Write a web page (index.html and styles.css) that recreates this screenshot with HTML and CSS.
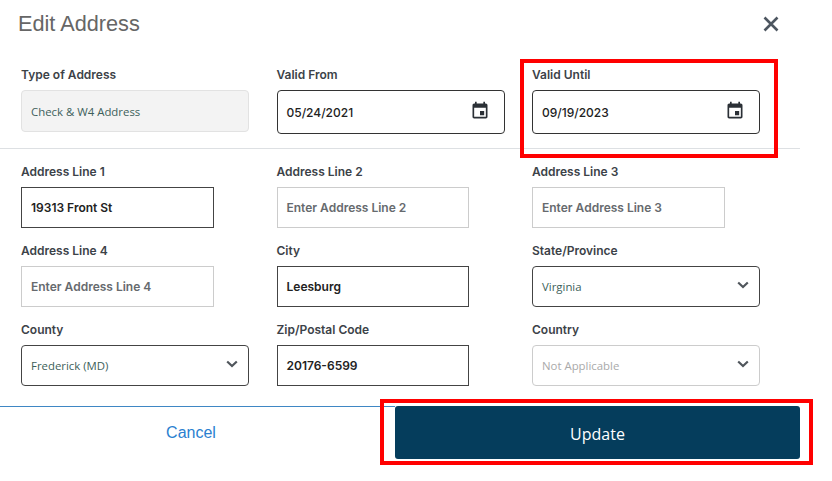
FILE: index.html
```html
<!DOCTYPE html>
<html lang="en">
<head>
    <meta charset="UTF-8">
    <meta name="viewport" content="width=device-width, initial-scale=1.0">
    <title>Edit Address</title>
    <link rel="stylesheet" href="styles.css">
</head>
<body>

    <div class="modal">
        <header class="modal-header">
            <h1>Edit Address</h1>
            <svg class="close-icon" viewBox="0 0 16 16"><path d="M1.5 1.5l13 13M14.5 1.5l-13 13"/></svg>
        </header>

        <div class="form-grid top-row">
            <div class="field">
                <label>Type of Address</label>
                <div class="box readonly">Check &amp; W4 Address</div>
            </div>
            <div class="field">
                <label>Valid From</label>
                <div class="box date">05/24/2021
                    <svg class="calendar-icon" viewBox="0 0 24 24"><path d="M17 12h-5v5h5v-5zM16 1v2H8V1H6v2H5c-1.11 0-1.99.9-1.99 2L3 19c0 1.1.89 2 2 2h14c1.1 0 2-.9 2-2V5c0-1.1-.9-2-2-2h-1V1h-2zm3 18H5V8h14v11z"/></svg>
                </div>
            </div>
            <div class="field">
                <label>Valid Until</label>
                <div class="box date">09/19/2023
                    <svg class="calendar-icon" viewBox="0 0 24 24"><path d="M17 12h-5v5h5v-5zM16 1v2H8V1H6v2H5c-1.11 0-1.99.9-1.99 2L3 19c0 1.1.89 2 2 2h14c1.1 0 2-.9 2-2V5c0-1.1-.9-2-2-2h-1V1h-2zm3 18H5V8h14v11z"/></svg>
                </div>
            </div>
        </div>

        <hr class="divider">

        <div class="form-grid">
            <div class="field">
                <label>Address Line 1</label>
                <div class="box text filled">19313 Front St</div>
            </div>
            <div class="field">
                <label>Address Line 2</label>
                <div class="box text">Enter Address Line 2</div>
            </div>
            <div class="field">
                <label>Address Line 3</label>
                <div class="box text">Enter Address Line 3</div>
            </div>
            <div class="field">
                <label>Address Line 4</label>
                <div class="box text">Enter Address Line 4</div>
            </div>
            <div class="field">
                <label>City</label>
                <div class="box text filled">Leesburg</div>
            </div>
            <div class="field">
                <label>State/Province</label>
                <div class="box select">Virginia
                    <svg class="chevron" viewBox="0 0 12 8"><path d="M1.2 1.5L6 6l4.8-4.5"/></svg>
                </div>
            </div>
            <div class="field">
                <label>County</label>
                <div class="box select">Frederick (MD)
                    <svg class="chevron" viewBox="0 0 12 8"><path d="M1.2 1.5L6 6l4.8-4.5"/></svg>
                </div>
            </div>
            <div class="field">
                <label>Zip/Postal Code</label>
                <div class="box text filled">20176-6599</div>
            </div>
            <div class="field">
                <label>Country</label>
                <div class="box select disabled">Not Applicable
                    <svg class="chevron" viewBox="0 0 12 8"><path d="M1.2 1.5L6 6l4.8-4.5"/></svg>
                </div>
            </div>
        </div>

        <footer class="modal-footer">
            <a class="cancel">Cancel</a>
            <button type="button" class="update">Update</button>
        </footer>
    </div>

    <div class="callout callout-date"></div>
    <div class="callout callout-update"></div>

</body>
</html>
```

FILE: styles.css
```css
body {
    font-family: Inter, "Liberation Sans", Arial, sans-serif;
    margin: 0;
    padding: 0;
    background-color: #fff;
}

.modal {
    width: 800px;
}

.modal-header {
    display: flex;
    justify-content: space-between;
    align-items: center;
    height: 48px;
    padding-left: 18px;
    padding-right: 21px;
}

.modal-header h1 {
    margin: 0;
    font-family: "Liberation Sans", Arial, sans-serif;
    font-size: 21.7px;
    font-weight: normal;
    color: #666;
}

.close-icon {
    width: 16px;
    height: 16px;
    fill: none;
    stroke: #4d5660;
    stroke-width: 2.6;
}

.form-grid {
    display: grid;
    grid-template-columns: 255.5px 255.5px 228px;
    row-gap: 15px;
    padding-left: 21px;
}

.top-row {
    padding-top: 19px;
}

.field label {
    display: block;
    height: 23px;
    line-height: 15px;
    font-size: 12px;
    font-weight: 600;
    color: #3c4248;
}

.box {
    display: flex;
    align-items: center;
    box-sizing: border-box;
    height: 41px;
    font-size: 12px;
    font-weight: 600;
    padding-left: 9px;
}

.readonly {
    width: 228px;
    height: 42px;
    font-family: "Open Sans", sans-serif;
    font-size: 11.4px;
    font-weight: normal;
    color: #3d5f5b;
    background-color: #f3f3f3;
    border: 1px solid #e2e2e2;
    border-radius: 4px;
}

.date {
    justify-content: space-between;
    width: 228px;
    height: 44px;
    padding-right: 14px;
    font-weight: 500;
    color: #222;
    border: 1px solid #333;
    border-radius: 4px;
}

.calendar-icon {
    width: 20px;
    height: 20px;
    margin-top: -3px;
    fill: #2b3036;
}

.divider {
    height: 1px;
    margin: 14px 0 0 0;
    border: none;
    background-color: #dde0e3;
}

.divider + .form-grid {
    padding-top: 15px;
}

.text {
    width: 192.5px;
    color: #666a6e;
    border: 1px solid #ccc;
}

.filled {
    color: #222;
    border-color: #444;
}

.select {
    justify-content: space-between;
    width: 228px;
    padding-right: 10px;
    font-family: "Open Sans", sans-serif;
    font-size: 11.4px;
    font-weight: normal;
    color: #3d5f5b;
    border: 1px solid #444;
    border-radius: 4px;
}

.disabled {
    color: #aaa;
    border-color: #ccc;
}

.chevron {
    width: 12px;
    height: 8px;
    margin-top: -3px;
    fill: none;
    stroke: #50565c;
    stroke-width: 2.2;
}

.modal-footer {
    display: flex;
    margin-top: 20px;
    height: 53px;
}

.cancel {
    width: 395px;
    box-sizing: border-box;
    padding-top: 17px;
    padding-right: 13px;
    text-align: center;
    font-family: "Liberation Sans", Arial, sans-serif;
    font-size: 16px;
    color: #2a7fd0;
    border-top: 1px solid #3f87c4;
    cursor: pointer;
}

.update {
    flex: 1;
    padding-top: 4px;
    font-family: "Open Sans", sans-serif;
    font-size: 16px;
    color: #fff;
    background-color: #053d5c;
    border: none;
    border-radius: 3px;
    cursor: pointer;
}

/* red annotation boxes drawn over the form */
.callout {
    position: absolute;
    box-sizing: border-box;
    border: 4px solid #f00;
}

.callout-date {
    left: 520px;
    top: 59px;
    width: 258px;
    height: 99px;
}

.callout-update {
    left: 380px;
    top: 399px;
    width: 433px;
    height: 66px;
}
```
